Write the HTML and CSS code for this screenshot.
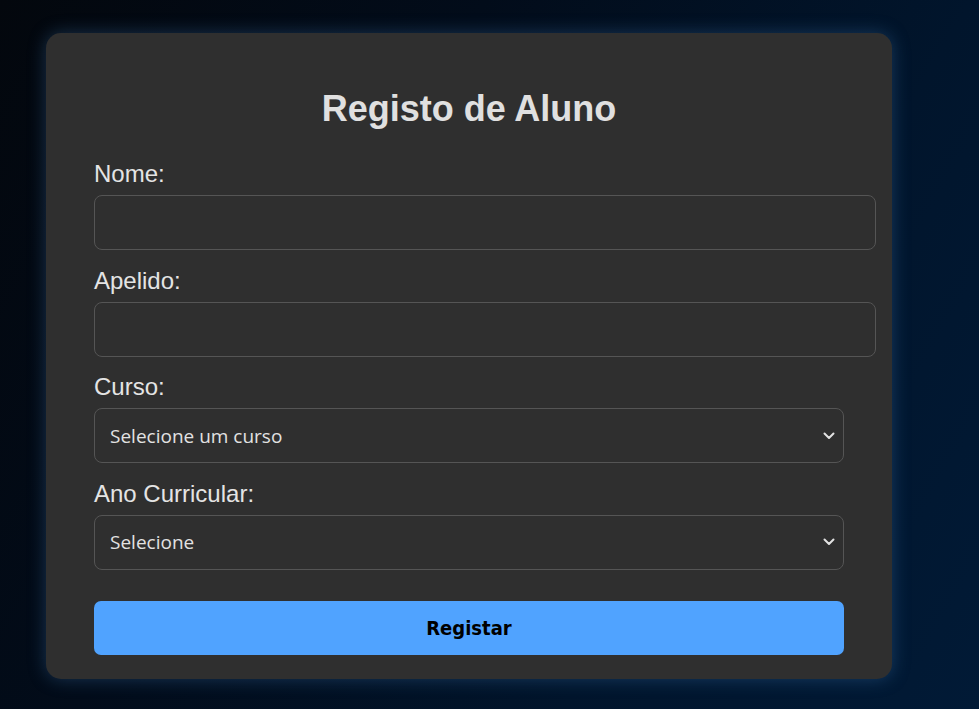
FILE: index.html
```html
<!DOCTYPE html>
<html lang="pt">
<head>
<meta charset="utf-8">
<title>Registo de Aluno</title>
<link rel="stylesheet" href="styles.css">
</head>
<body>
  <div class="card">
    <h2 class="title">Registo de Aluno</h2>
    <form class="form">
      <label class="label" for="nome">Nome:</label>
      <input class="field" type="text" id="nome">

      <label class="label" for="apelido">Apelido:</label>
      <input class="field" type="text" id="apelido">

      <label class="label" for="curso">Curso:</label>
      <div class="select-wrap">
        <select class="select" id="curso">
          <option>Selecione um curso</option>
        </select>
        <svg class="chev" width="12" height="8" viewBox="0 0 12 8"><path d="M1.5 1.5 L6 6 L10.5 1.5" fill="none" stroke="#e2e2e2" stroke-width="2" stroke-linecap="round" stroke-linejoin="round"/></svg>
      </div>

      <label class="label" for="ano">Ano Curricular:</label>
      <div class="select-wrap">
        <select class="select" id="ano">
          <option>Selecione</option>
        </select>
        <svg class="chev" width="12" height="8" viewBox="0 0 12 8"><path d="M1.5 1.5 L6 6 L10.5 1.5" fill="none" stroke="#e2e2e2" stroke-width="2" stroke-linecap="round" stroke-linejoin="round"/></svg>
      </div>

      <button class="btn" type="button">Registar</button>
    </form>
  </div>
</body>
</html>
```
FILE: styles.css
```css
html, body {
  margin: 0;
  height: 100%;
}
body {
  background: linear-gradient(120deg, #03070d 0%, #020c1a 35%, #01152c 70%, #011a36 100%);
  padding: 33px 0 0 46px;
  box-sizing: border-box;
  font-family: "Liberation Sans", Arial, sans-serif;
  overflow: hidden;
}
.card {
  width: 846px;
  box-sizing: border-box;
  padding: 24px 48px 24px;
  background: #2f2f2f;
  border-radius: 15px;
  box-shadow: 0 0 18px rgba(70, 130, 190, 0.35);
}
.title {
  margin: 31px 0 31px;
  font-size: 36px;
  line-height: 41px;
  font-weight: 700;
  color: #e0e0e0;
  text-align: center;
}
.form {
  display: block;
}
.label {
  display: block;
  font-size: 24px;
  line-height: 28px;
  color: #e4e4e4;
  margin: 0 0 7px;
}
.field {
  display: block;
  width: 100%;
  box-sizing: content-box;
  height: 23px;
  padding: 15px;
  margin: 0 0 16.6px;
  border: 1px solid #555555;
  border-radius: 8px;
  background: #2f2f2f;
  color: #e4e4e4;
  font-family: "Liberation Sans", Arial, sans-serif;
  font-size: 20px;
  outline: none;
}
.select-wrap {
  position: relative;
  margin: 0 0 16.6px;
}
.select {
  display: block;
  width: 100%;
  height: 55px;
  box-sizing: border-box;
  padding: 0 34px 0 15px;
  border: 1px solid #555555;
  border-radius: 8px;
  background: #2f2f2f;
  color: #e2e2e2;
  font-family: "Open Sans", "Noto Sans", sans-serif;
  font-size: 19px;
  -webkit-appearance: none;
  appearance: none;
  outline: none;
}
.chev {
  position: absolute;
  right: 9px;
  top: 50%;
  margin-top: -4px;
  pointer-events: none;
}
.btn {
  display: block;
  width: 100%;
  height: 54px;
  margin: 31px 0 0;
  border: none;
  border-radius: 7px;
  background: #50a3ff;
  color: #000000;
  font-family: "DejaVu Sans Condensed", "DejaVu Sans", sans-serif;
  font-weight: 700;
  font-size: 20px;
  cursor: pointer;
}
```
